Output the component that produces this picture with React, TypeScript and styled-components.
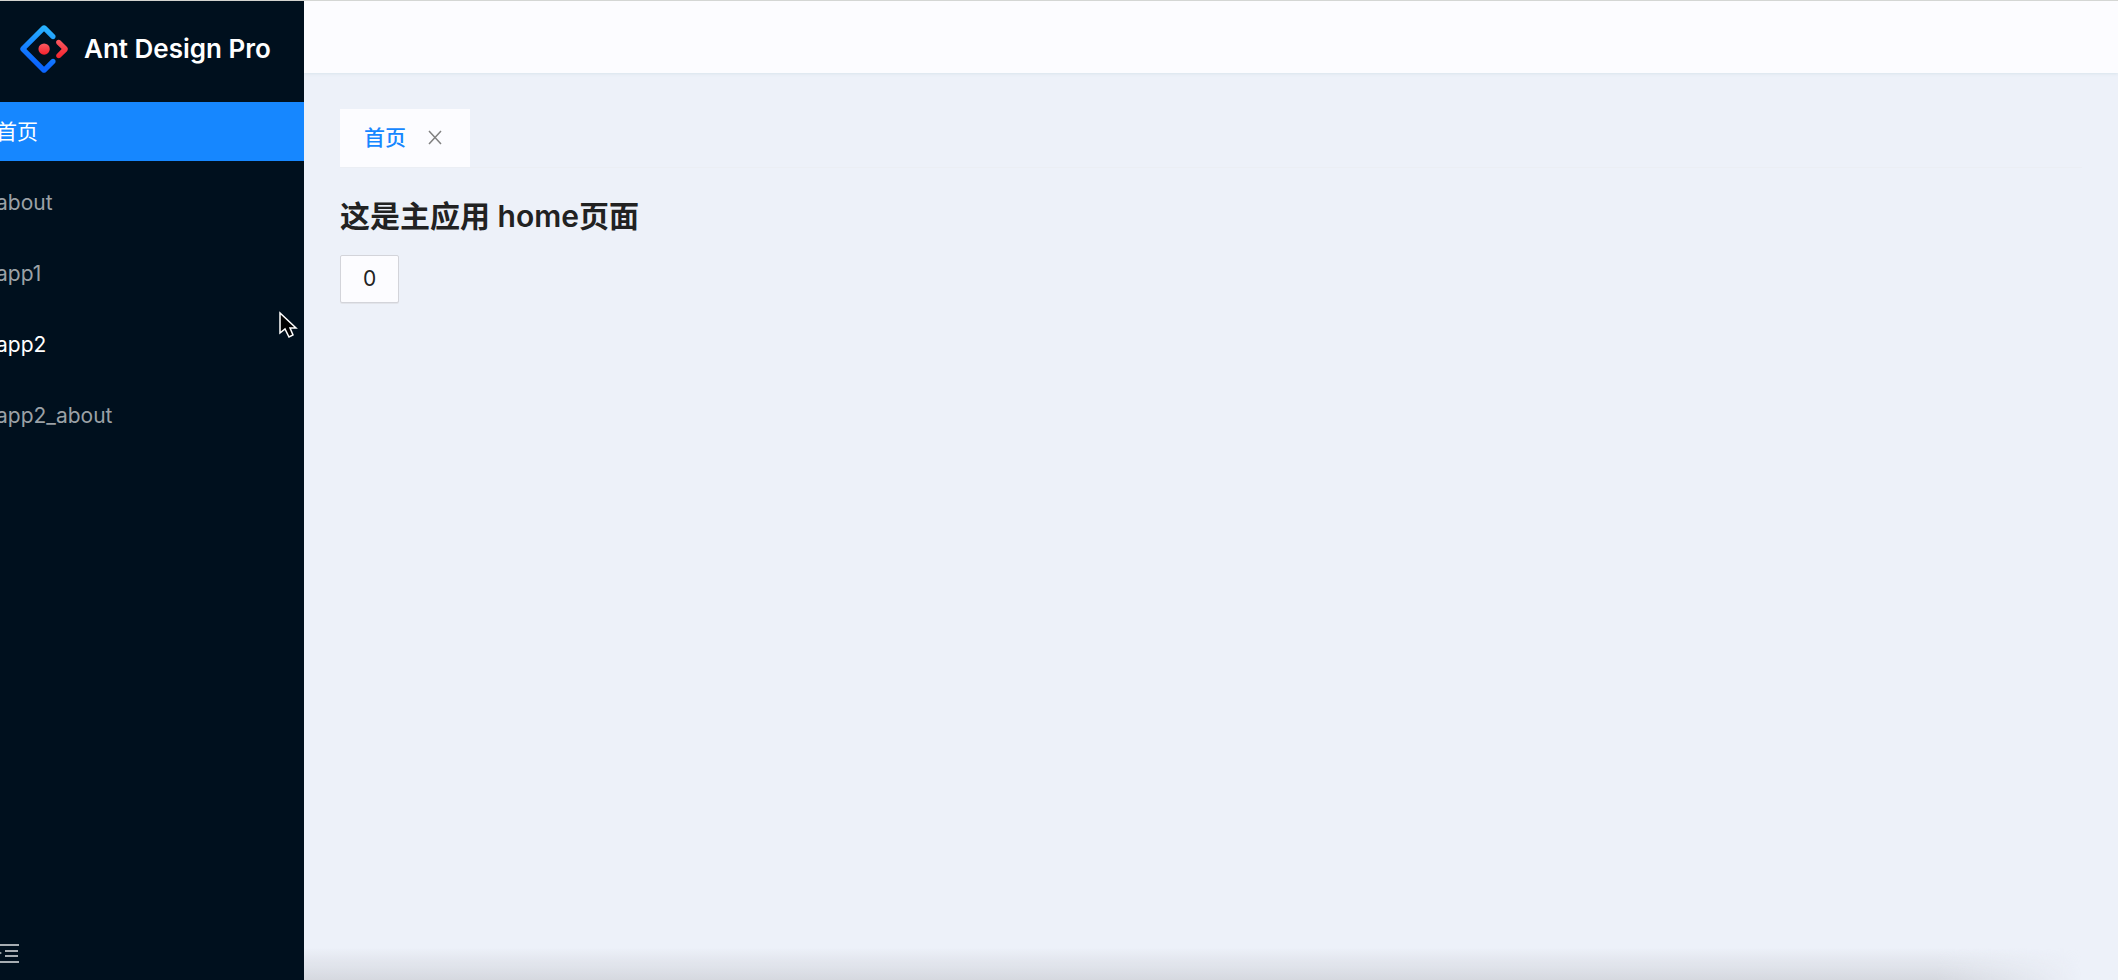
import React, { useState } from "react";
import styled, { createGlobalStyle } from "styled-components";

const GlobalStyle = createGlobalStyle`
  * { box-sizing: border-box; }
  body {
    margin: 0;
    overflow: hidden;
    background: #edf1f9;
    color: #222;
    font-family: Inter, "Noto Sans CJK SC", sans-serif;
    font-size: 21px;
    line-height: 30px;
  }
`;

const Layout = styled.div`
  display: flex;
  min-height: 100vh;
  border-top: 1px solid #d3d3cf;
`;

const Sider = styled.aside`
  position: relative;
  z-index: 1;
  display: flex;
  flex-direction: column;
  flex: none;
  width: 328px;
  margin-left: -24px;
  background: #00101e;
`;

const Brand = styled.a`
  display: flex;
  align-items: center;
  gap: 16px;
  padding: 24px 24px 29px 44px;
  color: #fff;
  font-size: 26px;
  font-weight: 600;
  line-height: 48px;
  white-space: nowrap;
  text-decoration: none;
`;

const Menu = styled.nav`
  display: flex;
  flex-direction: column;
  gap: 12px;
`;

const MenuLink = styled.a<{ $state?: "selected" | "hover" }>`
  padding: 1px 20px 0;
  font-size: 21px;
  line-height: 58px;
  text-decoration: none;
  color: ${({ $state }) => ($state ? "#fff" : "#9ba1a6")};
  background: ${({ $state }) => ($state === "selected" ? "#1687ff" : "transparent")};
`;

const FoldButton = styled.button`
  display: flex;
  margin-top: auto;
  padding: 16px;
  border: 0;
  background: transparent;
  color: #a7adb2;
`;

const Body = styled.div`
  display: flex;
  flex-direction: column;
  flex: 1;
  min-width: 0;
`;

const Header = styled.header`
  height: 72px;
  background: #fcfcff;
  box-shadow: 0 1px 3px #d9e4ec;
`;

const Content = styled.main`
  flex: 1;
  padding: 36px 36px 0;
`;

const TabBar = styled.div`
  display: flex;
  border-bottom: 1px solid #ebeef4;
`;

const Tab = styled.div`
  display: flex;
  align-items: center;
  gap: 18px;
  height: 58px;
  padding: 0 24px;
  background: #fcfcff;
`;

const TabLabel = styled.a`
  color: #1687ff;
  font-weight: 500;
  text-decoration: none;
`;

const CloseButton = styled.button`
  display: flex;
  padding: 2px;
  border: 0;
  background: transparent;
  color: #808080;
`;

const Title = styled.h2`
  margin: 27px 0 18px;
  font-size: 30px;
  font-weight: 600;
  line-height: 42px;
`;

const CountButton = styled.button`
  min-width: 59px;
  height: 48px;
  padding: 0 20px;
  border: 1px solid #d3d4da;
  border-radius: 2px;
  background: #fcfcff;
  box-shadow: 0 1px 0 #e2e4ea;
  color: #222;
  font: inherit;
`;

const BottomShade = styled.div`
  height: 32px;
  background: linear-gradient(to bottom, transparent, #d5d8df);
  mask-image: linear-gradient(to right, #000 90%, transparent 98%);
`;

const Pointer = styled.svg`
  position: absolute;
  left: 278px;
  top: 310px;
  z-index: 2;
  pointer-events: none;
`;

function Logo() {
  return (
    <svg width="48" height="48" viewBox="0 0 200 200" aria-hidden="true">
      <defs>
        <linearGradient id="blue" x1="0.6" y1="0" x2="0.4" y2="0.8">
          <stop offset="0" stopColor="#29b4ff" />
          <stop offset="1" stopColor="#0b66ff" />
        </linearGradient>
        <linearGradient id="red" x1="0.5" y1="0" x2="0.5" y2="1">
          <stop offset="0" stopColor="#fa5b62" />
          <stop offset="1" stopColor="#f5222d" />
        </linearGradient>
      </defs>
      <path
        fill="url(#blue)"
        d="M91.6 4.2 4.2 91.5c-4.7 4.7-4.7 12.3 0 17l87.4 87.3c4.7 4.7 12.3 4.7 17 0l36.6-36.6c4.2-4.2 4.2-11 0-15.2-4.2-4.2-11-4.2-15.2 0l-27.8 27.7c-1.2 1.2-2.9 1.2-4.1 0L28.3 102c-1.2-1.2-1.2-2.9 0-4.1l69.8-69.8c1.2-1.2 2.9-1.2 4.1 0L130 55.9c4.2 4.2 11 4.2 15.2 0 4.2-4.2 4.2-11 0-15.2L108.6 4.1c-4.7-4.6-12.3-4.6-17 .1Z"
      />
      <path
        fill="url(#red)"
        d="M153.7 135.9c4.2 4.2 11 4.2 15.2 0l27-27c4.7-4.7 4.7-12.3 0-17l-27.2-27.2c-4.2-4.2-11-4.2-15.3 0-4.2 4.2-4.2 11 0 15.2l18.5 18.4c1.2 1.2 1.2 3 0 4.1l-18.2 18.2c-4.2 4.2-4.2 11 0 15.3Z"
      />
      <circle fill="url(#red)" cx="100.5" cy="100.4" r="23.6" />
    </svg>
  );
}

const links: { label: string; state?: "selected" | "hover" }[] = [
  { label: "首页", state: "selected" },
  { label: "about" },
  { label: "app1" },
  { label: "app2", state: "hover" },
  { label: "app2_about" },
];

export default function App() {
  const [count, setCount] = useState(0);
  return (
    <>
      <GlobalStyle />
      <Layout>
        <Sider>
          <Brand href="#">
            <Logo />
            Ant Design Pro
          </Brand>
          <Menu>
            {links.map(({ label, state }) => (
              <MenuLink key={label} href="#" $state={state}>
                {label}
              </MenuLink>
            ))}
          </Menu>
          <FoldButton aria-label="Expand menu">
            <svg width="28" height="22" viewBox="0 0 28 22" fill="none" stroke="currentColor" strokeWidth="2">
              <path d="M7 3h20M13 9h13M13 14h13M7 20h20" />
              <path d="M4 7l6 4-6 4z" fill="currentColor" stroke="none" />
            </svg>
          </FoldButton>
        </Sider>
        <Body>
          <Header />
          <Content>
            <TabBar>
              <Tab>
                <TabLabel href="#">首页</TabLabel>
                <CloseButton aria-label="Close tab">
                  <svg width="18" height="18" viewBox="0 0 18 18" fill="none" stroke="currentColor" strokeWidth="1.500">
                    <path d="M3 2l12 13M15 2l-12 13" />
                  </svg>
                </CloseButton>
              </Tab>
            </TabBar>
            <Title>这是主应用 home页面</Title>
            <CountButton onClick={() => setCount(count + 1)}>{count}</CountButton>
          </Content>
          <BottomShade />
        </Body>
      </Layout>
      <Pointer width="20" height="30" viewBox="0 0 20 30" aria-hidden="true">
        <path d="M2 3v20l5-4 4 8 4-2-3-7h6z" fill="#000" stroke="#fff" strokeWidth="1.500" />
      </Pointer>
    </>
  );
}
